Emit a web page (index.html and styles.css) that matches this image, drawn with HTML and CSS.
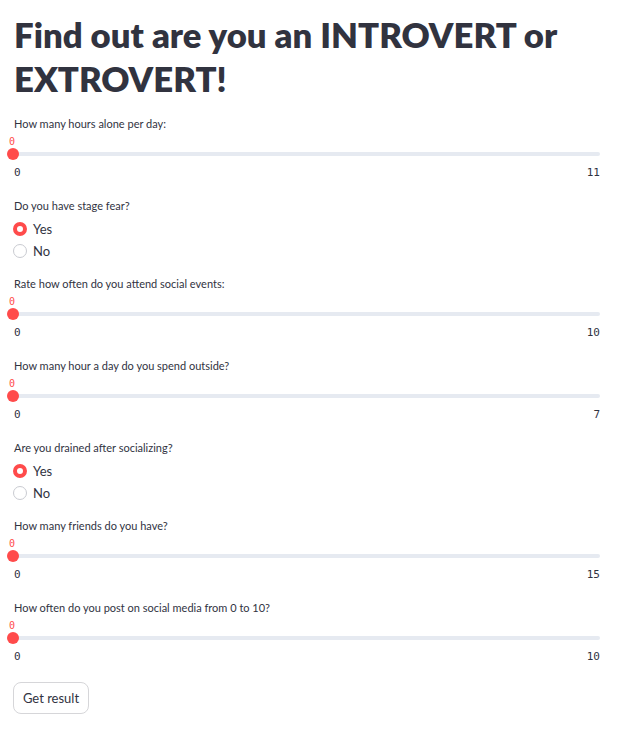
FILE: index.html
```html
<!DOCTYPE html>
<html lang="en">
<head>
<meta charset="utf-8">
<title>Introvert or Extrovert</title>
<link rel="stylesheet" href="styles.css">
</head>
<body>
<main class="page">
  <h1 class="title">Find out are you an INTROVERT or EXTROVERT!</h1>

  <div class="widget slider">
    <div class="label">How many hours alone per day:</div>
    <div class="value-row"><span class="value">0</span></div>
    <div class="track-row"><div class="track"><span class="thumb"></span></div></div>
    <div class="minmax"><span>0</span><span>11</span></div>
  </div>

  <div class="widget radio">
    <div class="label">Do you have stage fear?</div>
    <div class="option"><span class="dot on"></span><span>Yes</span></div>
    <div class="option"><span class="dot"></span><span>No</span></div>
  </div>

  <div class="widget slider">
    <div class="label">Rate how often do you attend social events:</div>
    <div class="value-row"><span class="value">0</span></div>
    <div class="track-row"><div class="track"><span class="thumb"></span></div></div>
    <div class="minmax"><span>0</span><span>10</span></div>
  </div>

  <div class="widget slider">
    <div class="label">How many hour a day do you spend outside?</div>
    <div class="value-row"><span class="value">0</span></div>
    <div class="track-row"><div class="track"><span class="thumb"></span></div></div>
    <div class="minmax"><span>0</span><span>7</span></div>
  </div>

  <div class="widget radio">
    <div class="label">Are you drained after socializing?</div>
    <div class="option"><span class="dot on"></span><span>Yes</span></div>
    <div class="option"><span class="dot"></span><span>No</span></div>
  </div>

  <div class="widget slider">
    <div class="label">How many friends do you have?</div>
    <div class="value-row"><span class="value">0</span></div>
    <div class="track-row"><div class="track"><span class="thumb"></span></div></div>
    <div class="minmax"><span>0</span><span>15</span></div>
  </div>

  <div class="widget slider">
    <div class="label">How often do you post on social media from 0 to 10?</div>
    <div class="value-row"><span class="value">0</span></div>
    <div class="track-row"><div class="track"><span class="thumb"></span></div></div>
    <div class="minmax"><span>0</span><span>10</span></div>
  </div>

  <button class="btn" type="button">Get result</button>
</main>
</body>
</html>
```

FILE: styles.css
```css
html, body {
  margin: 0;
  padding: 0;
  background: #ffffff;
}

body {
  font-family: "Lato", "Noto Sans", sans-serif;
  color: #31333f;
}

.page {
  display: flex;
  flex-direction: column;
  align-items: stretch;
  padding: 13px 40px 0 13px;
}

.title {
  margin: 0 0 15px 1px;
  font-size: 34.7px;
  line-height: 44px;
  font-weight: 800;
  color: #31333f;
}

.widget {
  display: flex;
  flex-direction: column;
  margin-bottom: 14px;
}

.label {
  height: 16px;
  line-height: 16px;
  font-size: 11px;
  padding-left: 1px;
  color: #31333f;
}

.value-row {
  height: 14px;
  line-height: 14px;
}

.value {
  display: inline-block;
  margin-left: -4px;
  font-family: "DejaVu Sans Mono", monospace;
  font-size: 10px;
  color: #ff4b4b;
}

.track-row {
  height: 15px;
  display: flex;
  align-items: center;
}

.track {
  position: relative;
  flex: 1;
  height: 4px;
  border-radius: 2px;
  background: #e6eaf1;
}

.thumb {
  position: absolute;
  left: -6px;
  top: -4px;
  width: 12px;
  height: 12px;
  border-radius: 50%;
  background: #ff4b4b;
}

.minmax {
  height: 23px;
  line-height: 23px;
  display: flex;
  justify-content: space-between;
  padding-left: 1px;
  font-family: "DejaVu Sans Mono", monospace;
  font-size: 11px;
  color: #31333f;
}

.radio .label {
  margin-bottom: 4px;
}

.option {
  height: 22px;
  display: flex;
  align-items: center;
  gap: 6px;
  font-size: 13px;
}

.dot {
  box-sizing: border-box;
  width: 14px;
  height: 14px;
  border-radius: 50%;
  border: 1px solid #c9cbd1;
  background: #ffffff;
}

.dot.on {
  border: 4px solid #ff4b4b;
  background: #ffffff;
}

.btn {
  align-self: flex-start;
  box-sizing: border-box;
  height: 32px;
  width: 76px;
  padding: 0;
  border: 1px solid #d6d6d9;
  border-radius: 8px;
  background: #ffffff;
  font-family: "Lato", "Noto Sans", sans-serif;
  font-size: 13px;
  color: #31333f;
}
```
